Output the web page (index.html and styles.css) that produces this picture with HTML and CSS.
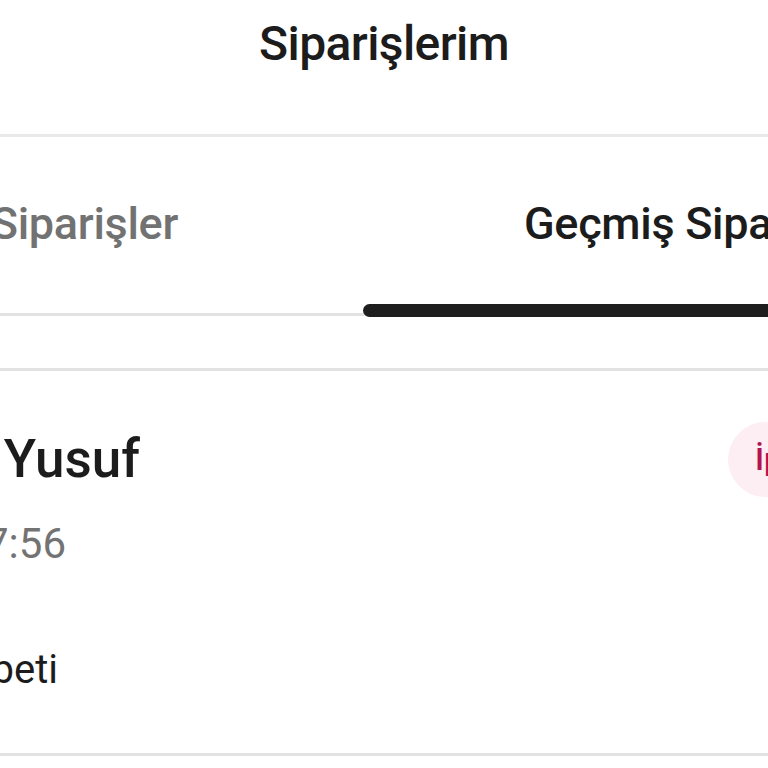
FILE: index.html
```html
<!DOCTYPE html>
<html lang="tr">
<head>
<meta charset="utf-8">
<title>Siparişlerim</title>
<link rel="stylesheet" href="styles.css">
</head>
<body>
<div class="screen">
  <header class="header">
    <h1 class="title">Siparişlerim</h1>
  </header>
  <nav class="tabs">
    <div class="tab tab-left">
      <span class="tab-label">Aktif Siparişler</span>
    </div>
    <div class="tab tab-right">
      <span class="tab-label active">Geçmiş Siparişler</span>
      <span class="indicator"></span>
    </div>
  </nav>
  <section class="card">
    <div class="card-row">
      <div class="clip-line name-line"><span class="name">Mehmet Yusuf</span></div>
      <div class="badge">İptal Edildi</div>
    </div>
    <div class="clip-line date-line"><span class="date">12.03.2024 17:56</span></div>
    <div class="clip-line shop-line"><span class="shop">Lezzet Sohbeti</span></div>
  </section>
</div>
</body>
</html>
```

FILE: styles.css
```css
html, body {
  margin: 0;
  padding: 0;
  background: #ffffff;
}
body {
  width: 768px;
  height: 768px;
  overflow: hidden;
  font-family: Roboto, "Noto Sans", sans-serif;
  color: #1c1c1c;
}
.screen {
  width: 768px;
  overflow: hidden;
}
.header {
  height: 134px;
  border-bottom: 3px solid #e9e9e9;
  display: flex;
  justify-content: center;
  align-items: flex-start;
}
.title {
  margin: 0;
  padding-top: 20px;
  font-size: 48px;
  line-height: 48px;
  font-weight: 500;
  letter-spacing: -0.6px;
  color: #1c1c1c;
}
.tabs {
  display: flex;
  height: 176px;
  border-bottom: 3px solid #e2e2e2;
}
.tab {
  position: relative;
  display: flex;
  white-space: nowrap;
  padding-top: 64px;
  box-sizing: border-box;
}
.tab-left {
  width: 363px;
  flex: none;
  justify-content: flex-end;
  padding-right: 185px;
}
.tab-right {
  flex: 1;
  min-width: 0;
  padding-left: 161px;
}
.tab-label {
  font-size: 45px;
  line-height: 45px;
  font-weight: 500;
  letter-spacing: -0.3px;
  color: #727272;
  flex: none;
}
.tab-label.active {
  color: #1c1c1c;
}
.indicator {
  position: absolute;
  left: 0;
  right: -30px;
  bottom: -4px;
  height: 13px;
  border-radius: 7px;
  background: #1e1e1e;
}
.card {
  margin-top: 52px;
  border-top: 3px solid #e2e2e2;
  border-bottom: 3px solid #e2e2e2;
  height: 331px;
  padding-top: 51px;
}
.card-row {
  display: flex;
  align-items: center;
  justify-content: space-between;
  height: 75px;
}
.clip-line {
  display: flex;
  justify-content: flex-end;
  white-space: nowrap;
}
.clip-line > span {
  flex: none;
}
.name-line {
  width: 140px;
}
.name {
  font-size: 53px;
  line-height: 53px;
  font-weight: 500;
  color: #1c1c1c;
}
.badge {
  flex: none;
  width: 40px;
  height: 75px;
  box-sizing: border-box;
  padding-left: 27px;
  border-radius: 38px 0 0 38px;
  background: #fdeef3;
  color: #b5134f;
  font-size: 32px;
  line-height: 75px;
  font-weight: 500;
  white-space: nowrap;
}
.date-line {
  width: 66px;
  margin-top: 26px;
}
.date {
  font-size: 42px;
  line-height: 42px;
  color: #737373;
}
.shop-line {
  width: 58px;
  margin-top: 85px;
}
.shop {
  font-size: 40px;
  line-height: 40px;
  color: #1c1c1c;
}
```
